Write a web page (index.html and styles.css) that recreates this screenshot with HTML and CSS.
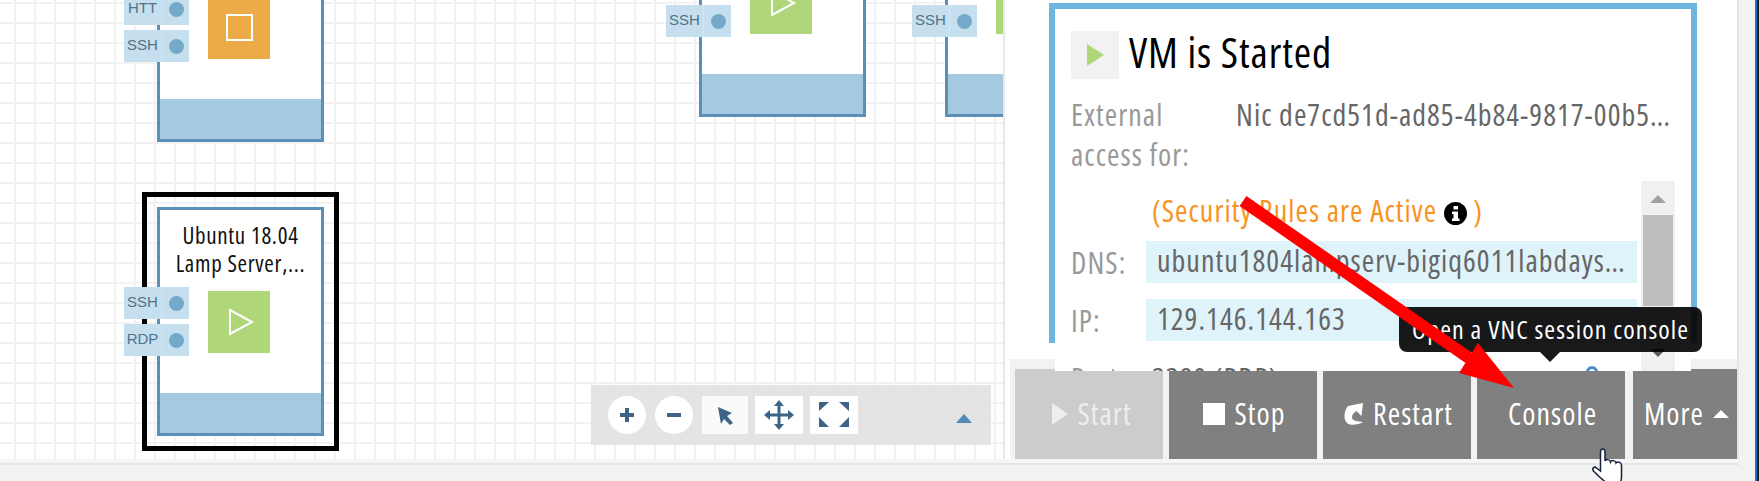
FILE: index.html
```html
<!DOCTYPE html>
<html lang="en">

<head>
    <title>Lab Blueprint</title>
    <link rel="stylesheet" href="styles.css">
</head>

<body>
    <div class="main">
        <div class="canvas">
            <div class="node node-a">
                <div class="node-icon stopped">
                    <svg width="62" height="62" viewBox="0 0 62 62"><rect x="19" y="18" width="25" height="25" fill="none" stroke="#fff" stroke-width="2"/></svg>
                </div>
                <div class="ports">
                    <div class="port"><span class="port-name">HTT</span><span class="port-dot"></span></div>
                    <div class="port"><span class="port-name">SSH</span><span class="port-dot"></span></div>
                </div>
                <div class="node-band"></div>
            </div>

            <div class="node node-b">
                <div class="node-icon started">
                    <svg width="62" height="62" viewBox="0 0 62 62"><polygon points="22,19 44,31 22,43" fill="none" stroke="#fff" stroke-width="2"/></svg>
                </div>
                <div class="ports">
                    <div class="port port-hidden"></div>
                    <div class="port"><span class="port-name">SSH</span><span class="port-dot"></span></div>
                </div>
                <div class="node-band"></div>
            </div>

            <div class="node node-c">
                <div class="node-icon started">
                    <svg width="62" height="62" viewBox="0 0 62 62"><polygon points="22,19 44,31 22,43" fill="none" stroke="#fff" stroke-width="2"/></svg>
                </div>
                <div class="ports">
                    <div class="port port-hidden"></div>
                    <div class="port"><span class="port-name">SSH</span><span class="port-dot"></span></div>
                </div>
                <div class="node-band"></div>
            </div>

            <div class="node node-d selected">
                <div class="node-title">Ubuntu 18.04<br>Lamp Server,...</div>
                <div class="node-icon started">
                    <svg width="62" height="62" viewBox="0 0 62 62"><polygon points="22,19 44,31 22,43" fill="none" stroke="#fff" stroke-width="2"/></svg>
                </div>
                <div class="ports">
                    <div class="port"><span class="port-name">SSH</span><span class="port-dot"></span></div>
                    <div class="port"><span class="port-name">RDP</span><span class="port-dot"></span></div>
                </div>
                <div class="node-band"></div>
            </div>

            <div class="toolbar">
                <button class="tool tool-round">
                    <svg width="38" height="38" viewBox="0 0 38 38"><path d="M12 17h5v-5h4v5h5v4h-5v5h-4v-5h-5z" fill="#3d6486"/></svg>
                </button>
                <button class="tool tool-round">
                    <svg width="38" height="38" viewBox="0 0 38 38"><rect x="12" y="17" width="14" height="4" fill="#3d6486"/></svg>
                </button>
                <button class="tool tool-pointer">
                    <svg width="46" height="38" viewBox="0 0 46 38"><polygon points="16,11 30,17 25,20 31,27 28,29 22,23 19,28" fill="#3d6486"/></svg>
                </button>
                <button class="tool tool-square">
                    <svg width="48" height="38" viewBox="0 0 48 38"><path d="M24 4l5 6h-3.500v7.500h7.500v-3.500l6 5-6 5v-3.500h-7.500v7.500h3.500l-5 6-5-6h3.500v-7.500h-7.500v3.500l-6-5 6-5v3.500h7.500v-7.500h-3.500z" fill="#3d6486"/></svg>
                </button>
                <button class="tool tool-square">
                    <svg width="48" height="38" viewBox="0 0 48 38"><path d="M9 6h10l-10 9zM39 6h-10l10 9zM9 31v-10l10 10zM39 31v-10l-10 10z" fill="#3d6486"/></svg>
                </button>
                <span class="toolbar-caret"></span>
            </div>
        </div>

        <div class="panel">
            <div class="vm-box">
                <div class="vm-inner">
                    <div class="vm-head">
                        <span class="vm-state"><span class="vm-state-play"></span></span>
                        <h1 class="vm-title">VM is Started</h1>
                    </div>

                    <div class="access">
                        <span class="label access-label">External<br>access for:</span>
                        <span class="value">Nic de7cd51d-ad85-4b84-9817-00b5…</span>
                    </div>

                    <div class="scroll-area">
                        <div class="scroll-list">
                            <div class="notice">(Security Rules are Active
                                <svg class="info" width="23" height="23" viewBox="0 0 23 23"><circle cx="11.500" cy="11.500" r="11.500" fill="#000"/><rect x="9.500" y="4" width="4.500" height="3.500" fill="#fff"/><path d="M8 9.500h6v7h1.500v2.500h-7.500v-2.500h1.500v-4.500h-1.500z" fill="#fff"/></svg>
                                )</div>
                            <div class="row"><span class="label row-label">DNS:</span><span class="value row-box">ubuntu1804lampserv-bigiq6011labdays…</span></div>
                            <div class="row"><span class="label row-label">IP:</span><span class="value row-box">129.146.144.163</span></div>
                            <div class="row"><span class="label row-label">Port:</span><span class="value row-plain">3389 (RDP)</span><span class="port-ring"></span></div>
                        </div>
                        <div class="scrollbar">
                            <span class="scroll-up"></span>
                            <span class="scroll-thumb"></span>
                            <span class="scroll-down"></span>
                        </div>
                    </div>
                </div>
            </div>

            <div class="actions">
                <button class="action disabled"><span class="ico-start"></span>Start</button>
                <button class="action"><span class="ico-stop"></span>Stop</button>
                <button class="action">
                    <svg class="ico-restart" width="20" height="22" viewBox="0 0 20 22"><path d="M4 3l15-3-1.500 13-5-5c-3.500 2-5.500 5-4 8 1.500 2 5.500 2.500 10.500 3-5 3-13 4-16 1-4-4-3-12 1-17z" fill="#fff"/></svg>
                    Restart
                </button>
                <button class="action">Console
                    <div class="tooltip">Open a VNC session console</div>
                </button>
                <button class="action action-more">More<span class="ico-up"></span></button>
            </div>
        </div>

        <div class="side"></div>
    </div>
    <div class="footer"></div>

    <svg class="overlay" width="1759" height="481" viewBox="0 0 1759 481">
        <line x1="1243" y1="201" x2="1469" y2="358" stroke="#f00" stroke-width="12"/>
        <polygon points="1478,343 1514,388 1459,373" fill="#f00"/>
        <path d="M1600.500 452c0-4 4.500-4 4.500 0v9c1-2 5-2 5.500 1 1-2 5-2 5.500 1 1.500-2 5-1 5.500 2v12c0 3-1 5-1 6h-14l-8-7-5-5c-2-3 1-5 3-3l4 3z" fill="#fff" stroke="#14213a" stroke-width="1.500"/>
    </svg>
</body>

</html>
```
FILE: styles.css
```css
* {
    box-sizing: border-box;
}

body {
    margin: 0;
    width: 1759px;
    height: 481px;
    overflow: hidden;
    background-color: #f2f2f2;
    font-family: "Open Sans", sans-serif;
    font-stretch: 75%;
}

button {
    border: 0;
    padding: 0;
    font-family: inherit;
    font-stretch: inherit;
}

.main {
    display: flex;
    height: 463px;
    background-color: #f6f6f6;
}

.footer {
    height: 18px;
    border-top: 2px solid #e4e4e4;
}

/* blueprint canvas */
.canvas {
    position: relative;
    width: 1003px;
    height: 459px;
    flex: none;
    overflow: hidden;
    background-color: #fff;
    background-image:
        linear-gradient(to right, #f2f2f2 2px, transparent 2px),
        linear-gradient(to bottom, #f2f2f2 2px, transparent 2px);
    background-size: 20px 20px;
    background-position: 14px 22px;
}

.node {
    position: absolute;
    width: 167px;
    height: 229px;
    background-color: #fff;
    border: 3px solid #5a90b7;
}

.node-a { left: 157px; top: -87px; }
.node-b { left: 699px; top: -112px; }
.node-c { left: 945px; top: -112px; }
.node-d { left: 157px; top: 207px; }

.selected::before {
    content: "";
    position: absolute;
    inset: -18px;
    border: 5px solid #000;
}

.node-title {
    position: absolute;
    left: 0;
    right: 0;
    top: 11px;
    text-align: center;
    font-size: 23px;
    letter-spacing: 0.7px;
    line-height: 28px;
    color: #111;
}

.node-icon {
    position: absolute;
    left: 48px;
    top: 81px;
    width: 62px;
    height: 62px;
}

.node-icon svg {
    display: block;
}

.stopped { background-color: #edab47; }
.started { background-color: #b0d67a; }

.node-band {
    position: absolute;
    left: 0;
    right: 0;
    bottom: 0;
    height: 40px;
    background-color: #a5cadf;
}

.ports {
    position: absolute;
    left: -36px;
    top: 77px;
    display: flex;
    flex-direction: column;
    gap: 5px;
}

.port {
    display: flex;
    width: 65px;
    height: 32px;
    align-items: center;
    background-color: #c5dfee;
}

.port-hidden {
    visibility: hidden;
}

.port-name {
    width: 38px;
    height: 100%;
    border-right: 1px solid #d3e6f2;
    text-align: center;
    font-family: "Liberation Sans", sans-serif;
    font-size: 15px;
    line-height: 29px;
    color: #4f7389;
}

.port-dot {
    width: 15px;
    height: 15px;
    margin-left: 7px;
    border-radius: 50%;
    background-color: #74a9c9;
}

/* zoom and pan controls */
.toolbar {
    position: absolute;
    left: 591px;
    top: 385px;
    display: flex;
    align-items: center;
    width: 400px;
    height: 60px;
    padding-left: 17px;
    background-color: #e4e4e4;
}

.tool {
    display: block;
    height: 38px;
    background-color: #fff;
}

.tool svg {
    display: block;
}

.tool-round {
    width: 38px;
    margin-right: 9px;
    border-radius: 50%;
}

.tool-pointer {
    width: 46px;
    margin-right: 7px;
    background-color: #fafafa;
}

.tool-square {
    width: 48px;
    margin-right: 7px;
}

.toolbar-caret {
    width: 0;
    height: 0;
    margin-left: 91px;
    margin-top: 6px;
    border-left: 8px solid transparent;
    border-right: 8px solid transparent;
    border-bottom: 9px solid #4f8bb5;
}

/* vm details */
.panel {
    width: 734px;
    margin-left: 2px;
    height: 459px;
    flex: none;
    background-color: #fff;
    border-right: 2px solid #e4e4e4;
    box-shadow: -2px 0 0 #e8e8e8;
}

.vm-box {
    width: 648px;
    height: 340px;
    margin: 3px 0 16px 44px;
    border: 6px solid #6db6dd;
    border-bottom: 0;
}

.vm-inner {
    position: relative;
    z-index: 1;
    height: 362px;
    padding: 22px 0 0 16px;
    overflow: hidden;
    background-color: #fff;
}

.vm-head {
    display: flex;
    align-items: center;
    gap: 10px;
    height: 48px;
}

.vm-state {
    display: flex;
    align-items: center;
    justify-content: center;
    width: 48px;
    height: 48px;
    background-color: #f2f2f2;
}

.vm-state-play {
    border-left: 17px solid #b0d67a;
    border-top: 11px solid transparent;
    border-bottom: 11px solid transparent;
}

.vm-title {
    margin: -6px 0 0;
    font-size: 42px;
    font-weight: 400;
    letter-spacing: 0.9px;
    line-height: 48px;
    color: #000;
}

.access {
    display: flex;
    height: 80px;
    margin: 16px 0 6px;
    font-size: 30px;
    letter-spacing: 1.05px;
    line-height: 40px;
}

.label {
    color: #999;
}

.value {
    color: #666;
}

.access-label {
    width: 165px;
    flex: none;
}

.scroll-area {
    display: flex;
    gap: 4px;
    height: 190px;
}

.scroll-list {
    width: 566px;
    font-size: 30px;
    letter-spacing: 1.05px;
}

.notice {
    height: 60px;
    padding: 15px 0 0 81px;
    line-height: 30px;
    color: #f7941e;
}

.info {
    vertical-align: -3px;
}

.row {
    display: flex;
    align-items: center;
    height: 42px;
    margin-bottom: 16px;
}

.row-label {
    width: 75px;
    flex: none;
}

.row-box {
    flex: 1;
    height: 42px;
    padding-left: 11px;
    line-height: 40px;
    background-color: #dff3fb;
    white-space: nowrap;
}

.row-plain {
    padding-left: 6px;
}

.port-ring {
    width: 12px;
    height: 12px;
    margin: 9px 39px 0 auto;
    border: 3px solid #4a90d0;
    border-radius: 50%;
    align-self: flex-start;
}

.scrollbar {
    display: flex;
    flex-direction: column;
    align-items: center;
    width: 34px;
    background-color: #f0f0f0;
}

.scroll-up {
    margin: 14px 0 12px;
    border-left: 8px solid transparent;
    border-right: 8px solid transparent;
    border-bottom: 8px solid #a0a0a0;
}

.scroll-thumb {
    width: 30px;
    height: 91px;
    background-color: #bdbdbd;
}

.scroll-down {
    margin-top: 43px;
    border-left: 8px solid transparent;
    border-right: 8px solid transparent;
    border-top: 8px solid #5a5a5a;
}

/* action buttons */
.actions {
    display: flex;
    gap: 6px;
    height: 100px;
    padding: 10px 0 0 5px;
    margin-left: 5px;
    background-color: #f2f2f2;
}

.action {
    position: relative;
    display: flex;
    align-items: center;
    justify-content: center;
    gap: 9px;
    width: 148px;
    height: 90px;
    padding-left: 3px;
    background-color: #808080;
    font-size: 30px;
    letter-spacing: 1.05px;
    line-height: 30px;
    color: #fff;
}

.disabled {
    padding-left: 6px;
    background-color: #ccc;
    color: #eee;
}

.action-more {
    width: 104px;
    margin-left: 2px;
}

.ico-start {
    border-left: 16px solid #eee;
    border-top: 11px solid transparent;
    border-bottom: 11px solid transparent;
}

.ico-stop {
    width: 22px;
    height: 22px;
    background-color: #fff;
}

.ico-up {
    border-left: 8px solid transparent;
    border-right: 8px solid transparent;
    border-bottom: 8px solid #fff;
}

.tooltip {
    position: absolute;
    z-index: 5;
    left: -78px;
    bottom: 107px;
    width: 303px;
    height: 45px;
    border-radius: 8px;
    background-color: rgba(0, 0, 0, 0.9);
    font-size: 26px;
    letter-spacing: 1.05px;
    line-height: 45px;
    text-align: center;
    white-space: nowrap;
    color: #fff;
}

.tooltip::after {
    content: "";
    position: absolute;
    left: 141px;
    top: 45px;
    border-left: 10px solid transparent;
    border-right: 10px solid transparent;
    border-top: 10px solid rgba(0, 0, 0, 0.9);
}

.side {
    flex: 1;
    height: 481px;
    background-color: #f2f2f2;
    border-right: 2px solid #1e1e1e;
    box-shadow: inset -2px 0 0 #1a73c9;
}

.overlay {
    position: absolute;
    left: 0;
    top: 0;
    z-index: 10;
    pointer-events: none;
}
```
